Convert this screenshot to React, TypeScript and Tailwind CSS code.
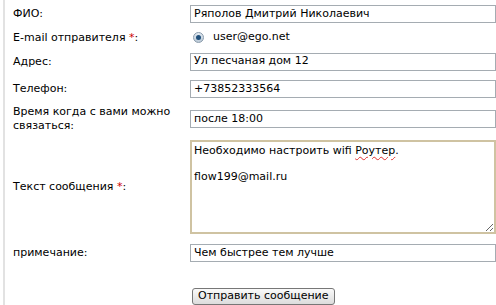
const font = { fontFamily: '"DejaVu Sans", Verdana, sans-serif' };

function Field({ value }: { value: string }) {
  return (
    <div className="flex h-[18px] w-[306px] shrink-0 items-center border border-[#a5acb2] bg-white px-[3px] text-[11px] text-black">
      {value}
    </div>
  );
}

function Row({ label, required, children, h }: { label: React.ReactNode; required?: boolean; children: React.ReactNode; h: string }) {
  return (
    <div className={`flex items-center ${h}`}>
      <div className="w-[185px] shrink-0 pl-[8px] text-[11px] leading-[14px] text-black">
        {label}
        {required && <span className="text-[#c00]"> *</span>}
        {required && ':'}
      </div>
      {children}
    </div>
  );
}

export default function App() {
  return (
    <div className="h-[305px] w-[496px] overflow-hidden bg-white" style={font}>
      <div className="ml-[3px] flex h-full flex-col border-l-2 border-[#e2e2e2] pt-[4px]">
        <Row label="ФИО:" h="h-[20px]">
          <Field value="Ряполов Дмитрий Николаевич" />
        </Row>
        <Row label="E-mail отправителя" required h="h-[28px]">
          <div className="flex items-center pl-[3px]">
            <span className="flex h-[11px] w-[11px] items-center justify-center rounded-full border border-[#8a9bab] bg-gradient-to-b from-[#e4ebf2] to-[#b9c8d6]">
              <span className="h-[5px] w-[5px] rounded-full bg-[#1f4f7a]" />
            </span>
            <span className="pl-[9px] text-[11px] text-black">user@ego.net</span>
          </div>
        </Row>
        <Row label="Адрес:" h="h-[20px]">
          <Field value="Ул песчаная дом 12" />
        </Row>
        <div className="h-[8px]" />
        <Row label="Телефон:" h="h-[20px]">
          <Field value="+73852333564" />
        </Row>
        <Row label={<>Время когда с вами можно<br />связаться:</>} h="h-[40px]">
          <Field value="после 18:00" />
        </Row>
        <Row label="Текст сообщения" required h="h-[96px]">
          <div className="h-[94px] w-[306px] shrink-0 resize overflow-auto border-2 border-[#cfc3a2] bg-white px-[2px] py-[2px] text-[11px] leading-[13px] text-black">
            Необходимо настроить wifi{' '}
            <span className="underline decoration-[#e03030] decoration-wavy decoration-1 underline-offset-2">Роутер</span>.
            <br />
            <br />
            flow199@mail.ru
          </div>
        </Row>
        <div className="h-[8px]" />
        <Row label="примечание:" h="h-[22px]">
          <Field value="Чем быстрее тем лучше" />
        </Row>
        <div className="flex pl-[187px] pt-[24px]">
          <button className="h-[17px] rounded-[3px] border border-[#777] bg-gradient-to-b from-[#fafafa] to-[#dcdcdc] px-[5px] text-[11px] leading-[14px] text-black">
            Отправить сообщение
          </button>
        </div>
      </div>
    </div>
  );
}
